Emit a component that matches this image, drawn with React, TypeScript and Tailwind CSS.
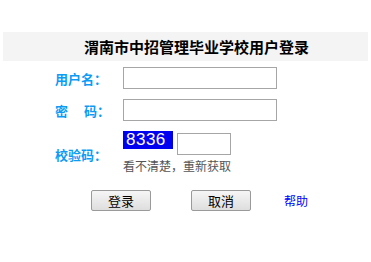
import React from "react";

const cjk = { fontFamily: '"Noto Sans CJK SC", "Noto Sans", sans-serif' };

export default function App() {
  return (
    <div className="w-[371px] h-[262px] bg-white" style={cjk}>
      <div className="pt-[32px] pl-[3px]">
        <div className="w-[365px] h-[29px] bg-[#f4f4f4] flex items-center pl-[81px]">
          <span className="text-[15px] font-bold text-black leading-none">渭南市中招管理毕业学校用户登录</span>
        </div>
      </div>
      <div className="pl-[55px] pt-[6px] flex flex-col">
        <div className="flex items-center h-[22px]">
          <span className="w-[68px] text-[13px] font-bold text-[#0c9cf5] leading-none">用户名：</span>
          <input className="w-[154px] h-[22px] border border-[#a6a6a6] outline-none bg-white" />
        </div>
        <div className="flex items-center h-[22px] mt-[10px]">
          <span className="w-[68px] text-[13px] font-bold text-[#0c9cf5] leading-none whitespace-pre">密　 码：</span>
          <input type="password" className="w-[154px] h-[22px] border border-[#a6a6a6] outline-none bg-white" />
        </div>
        <div className="flex items-center mt-[10px]">
          <span className="w-[68px] text-[13px] font-bold text-[#0c9cf5] leading-none pt-[4px]">校验码：</span>
          <div className="flex flex-col">
            <div className="flex items-start">
              <div className="w-[50px] h-[18px] bg-[#0000f0] text-white text-[17px] leading-[18px] pl-[3px] tracking-[0.5px]" style={{ fontFamily: '"Liberation Sans", Arial, sans-serif' }}>8336</div>
              <input className="ml-[4px] mt-[2px] w-[54px] h-[22px] border border-[#a6a6a6] outline-none bg-white" />
            </div>
            <span className="mt-[3px] text-[12px] text-[#555555] leading-[16px]">看不清楚，重新获取</span>
          </div>
        </div>
      </div>
      <div className="flex items-center pl-[91px] mt-[16px]">
        <button className="w-[60px] h-[21px] border border-[#9a9a9a] rounded-[2px] bg-gradient-to-b from-[#f6f6f6] to-[#dedede] text-[13px] text-black leading-none">登录</button>
        <button className="ml-[40px] w-[60px] h-[21px] border border-[#9a9a9a] rounded-[2px] bg-gradient-to-b from-[#f6f6f6] to-[#dedede] text-[13px] text-black leading-none">取消</button>
        <span className="ml-[33px] text-[12px] text-[#0000ff] leading-none">帮助</span>
      </div>
    </div>
  );
}
